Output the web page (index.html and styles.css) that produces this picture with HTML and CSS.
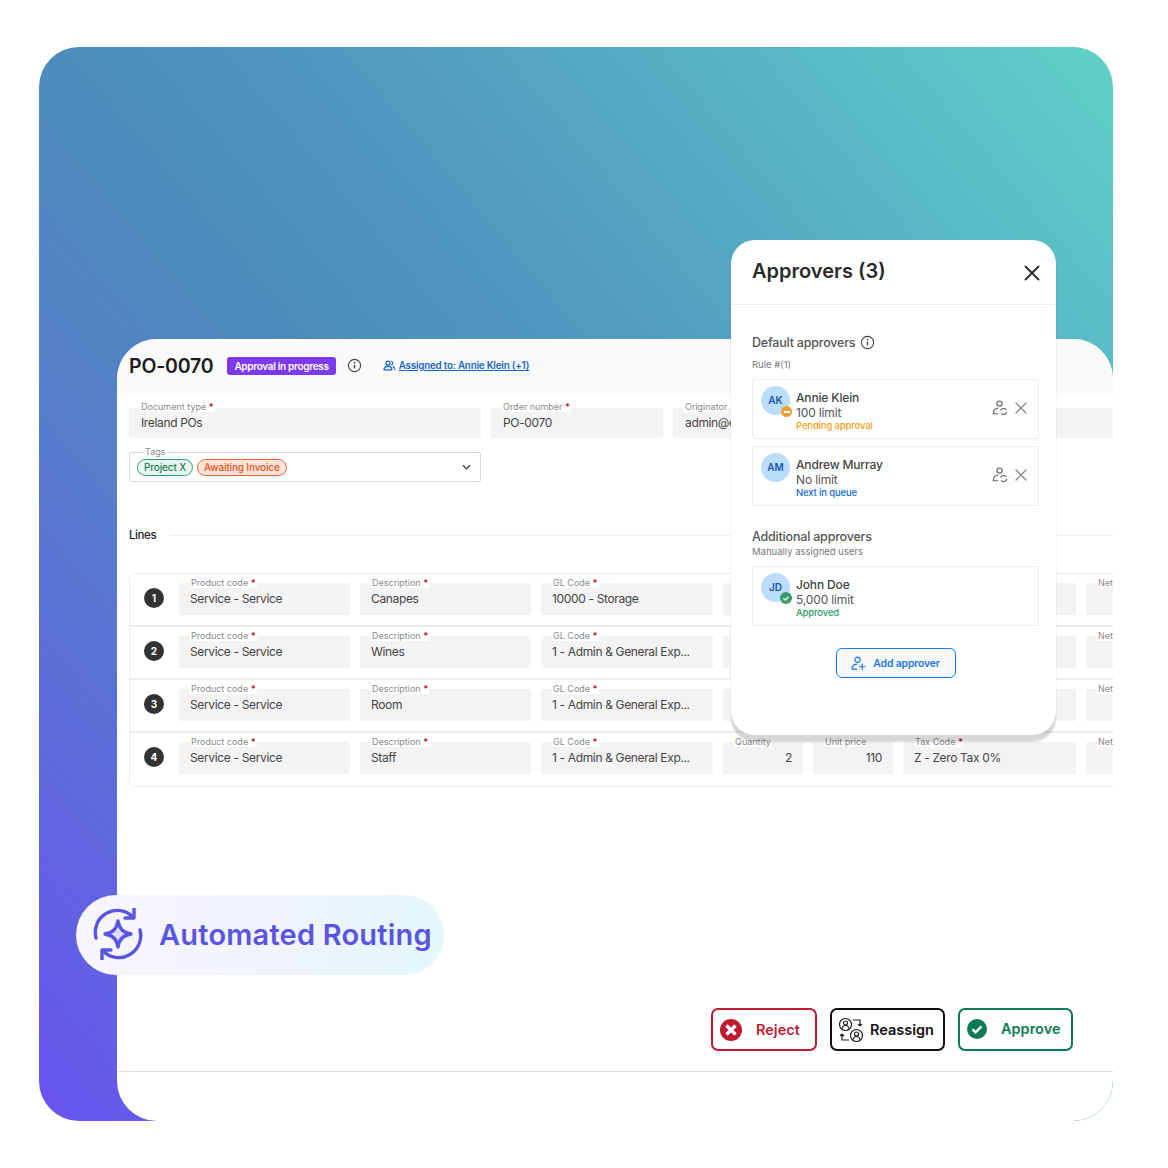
FILE: index.html
```html
<!DOCTYPE html>
<html lang="en">
<head>
    <meta charset="UTF-8">
    <title>Automated Routing</title>
    <link rel="stylesheet" href="styles.css">
</head>
<body>

<svg class="defs" width="0" height="0">
    <symbol id="i-info" viewBox="0 0 16 16">
        <circle cx="8" cy="8" r="6.5" fill="none" stroke="currentColor" stroke-width="1.2"/>
        <path d="M8 7.2v4" fill="none" stroke="currentColor" stroke-width="1.4"/>
        <circle cx="8" cy="5" r="0.9" fill="currentColor"/>
    </symbol>
    <symbol id="i-swap-user" viewBox="0 0 18 18">
        <g fill="none" stroke="currentColor" stroke-width="1.300" stroke-linecap="round">
            <circle cx="8.500" cy="4" r="2.900"/>
            <path d="M1.500 15.500c0-3.500 2-5.800 5-6.300"/>
            <path d="M1.500 15.500h5"/>
            <path d="M9.800 11.500a3.800 3.800 0 0 1 6-.8"/>
            <path d="M16.500 14a3.800 3.800 0 0 1-6 1.500"/>
        </g>
    </symbol>
    <symbol id="i-x" viewBox="0 0 14 14">
        <path d="M2 2l10 10M12 2L2 12" fill="none" stroke="currentColor" stroke-width="1.3" stroke-linecap="round"/>
    </symbol>
</svg>

<div class="panel">
    <main class="doc">
        <header class="doc-head">
            <h1>PO-0070</h1>
            <span class="status">Approval in progress</span>
            <svg class="info"><use href="#i-info"/></svg>
            <svg class="assign-icon" viewBox="0 0 16 14">
                <g fill="none" stroke="currentColor" stroke-width="1.5" stroke-linecap="round">
                    <circle cx="6" cy="4" r="2.6"/>
                    <path d="M1 12.5c0-3 2-4.500 5-4.500s5 1.500 5 4.500z"/>
                    <path d="M10.500 1.600a2.600 2.600 0 0 1 0 4.800M12.500 8.400c1.500.6 2.500 2 2.500 4"/>
                </g>
            </svg>
            <a class="assign" href="#">Assigned to: Annie Klein (+1)</a>
        </header>

        <section class="doc-fields">
            <div class="field f-doc"><label>Document type <b>*</b></label>Ireland POs</div>
            <div class="field f-order"><label>Order number <b>*</b></label>PO-0070</div>
            <div class="field f-orig"><label>Originator</label>admin@example.com</div>
            <div class="field f-rest"></div>
            <div class="field tags">
                <label>Tags</label>
                <span class="tag tag-green">Project X</span>
                <span class="tag tag-orange">Awaiting Invoice</span>
                <svg class="chev" viewBox="0 0 10 6"><path d="M1 1l4 4 4-4" fill="none" stroke="currentColor" stroke-width="1.5"/></svg>
            </div>
        </section>

        <div class="lines-title"><span>Lines</span><i></i></div>

        <section class="lines">
            <div class="line">
                <span class="num">1</span>
                <div class="field"><label>Product code <b>*</b></label>Service - Service</div>
                <div class="field"><label>Description <b>*</b></label>Canapes</div>
                <div class="field"><label>GL Code <b>*</b></label>10000 - Storage</div>
                <div class="field"></div>
                <div class="field"></div>
                <div class="field"></div>
                <div class="field"><label>Net</label></div>
            </div>
            <div class="line">
                <span class="num">2</span>
                <div class="field"><label>Product code <b>*</b></label>Service - Service</div>
                <div class="field"><label>Description <b>*</b></label>Wines</div>
                <div class="field"><label>GL Code <b>*</b></label>1 - Admin &amp; General Exp...</div>
                <div class="field"></div>
                <div class="field"></div>
                <div class="field"></div>
                <div class="field"><label>Net</label></div>
            </div>
            <div class="line">
                <span class="num">3</span>
                <div class="field"><label>Product code <b>*</b></label>Service - Service</div>
                <div class="field"><label>Description <b>*</b></label>Room</div>
                <div class="field"><label>GL Code <b>*</b></label>1 - Admin &amp; General Exp...</div>
                <div class="field"></div>
                <div class="field"></div>
                <div class="field"></div>
                <div class="field"><label>Net</label></div>
            </div>
            <div class="line">
                <span class="num">4</span>
                <div class="field"><label>Product code <b>*</b></label>Service - Service</div>
                <div class="field"><label>Description <b>*</b></label>Staff</div>
                <div class="field"><label>GL Code <b>*</b></label>1 - Admin &amp; General Exp...</div>
                <div class="field right"><label>Quantity</label>2</div>
                <div class="field right"><label>Unit price</label>110</div>
                <div class="field"><label>Tax Code <b>*</b></label>Z - Zero Tax 0%</div>
                <div class="field"><label>Net</label></div>
            </div>
        </section>

        <div class="actions">
            <button class="btn btn-reject">
                <svg viewBox="0 0 22 22"><circle cx="11" cy="11" r="11" fill="#c01a33"/><path d="M6.500 6.500l9 9M15.500 6.500l-9 9" stroke="#fff" stroke-width="3.400"/></svg>
                Reject
            </button>
            <button class="btn btn-reassign">
                <svg viewBox="0 0 26 26">
                    <g fill="none" stroke="#222" stroke-width="1.200">
                        <circle cx="7.500" cy="7.500" r="6"/>
                        <circle cx="7.500" cy="6" r="2"/>
                        <path d="M3.800 12c.5-2.500 2-3.500 3.700-3.500s3.200 1 3.700 3.500"/>
                        <circle cx="18.500" cy="18.500" r="6"/>
                        <circle cx="18.500" cy="17" r="2"/>
                        <path d="M14.800 23c.5-2.500 2-3.500 3.700-3.500s3.200 1 3.700 3.500"/>
                        <path d="M15 3h7v6M20 7l2 2 2-2M11 23H4v-6M2 19l2-2 2 2"/>
                    </g>
                </svg>
                Reassign
            </button>
            <button class="btn btn-approve">
                <svg viewBox="0 0 20 20"><circle cx="10" cy="10" r="10" fill="#0b7a55"/><path d="M5.500 10.300l3 3 6-6" fill="none" stroke="#fff" stroke-width="2.400"/></svg>
                Approve
            </button>
        </div>
        <div class="doc-foot"></div>
    </main>

    <div class="feature">
        <svg class="feature-icon" viewBox="0 0 52 52">
            <g fill="none" stroke="#5b54e0" stroke-width="3.400" stroke-linecap="round" stroke-linejoin="round">
                <path d="M4 30A22 22 0 0 1 41 9"/>
                <path d="M42 1v9H33"/>
                <path d="M48 22A22 22 0 0 1 11 43"/>
                <path d="M10 51v-9h9"/>
                <path d="M26 13c1.500 8 5 11.500 13 13-8 1.500-11.500 5-13 13-1.500-8-5-11.500-13-13 8-1.500 11.500-5 13-13z" fill="#dcdcfb"/>
            </g>
        </svg>
        <span>Automated Routing</span>
    </div>

    <aside class="approvers">
        <header class="approvers-head">
            <h2>Approvers (3)</h2>
            <svg class="close" viewBox="0 0 16 16"><path d="M1.500 1.500l13 13M14.500 1.500l-13 13" fill="none" stroke="currentColor" stroke-width="1.900" stroke-linecap="round"/></svg>
        </header>
        <div class="approvers-body">
            <h3>Default approvers <svg class="info"><use href="#i-info"/></svg></h3>
            <p class="sub">Rule #(1)</p>
            <div class="person">
                <div class="avatar">AK<i class="dot"></i></div>
                <div class="who">
                    <strong>Annie Klein</strong>
                    <span>100 limit</span>
                    <em class="pending">Pending approval</em>
                </div>
                <svg class="act"><use href="#i-swap-user"/></svg>
                <svg class="act-x"><use href="#i-x"/></svg>
            </div>
            <div class="person">
                <div class="avatar">AM</div>
                <div class="who">
                    <strong>Andrew Murray</strong>
                    <span>No limit</span>
                    <em class="next">Next in queue</em>
                </div>
                <svg class="act"><use href="#i-swap-user"/></svg>
                <svg class="act-x"><use href="#i-x"/></svg>
            </div>

            <h3 class="second">Additional approvers</h3>
            <p class="sub sub-tight">Manually assigned users</p>
            <div class="person">
                <div class="avatar">JD
                    <svg class="dot-ok" viewBox="0 0 12 12"><circle cx="6" cy="6" r="6" fill="#3a9c6e"/><path d="M3.500 6.200l1.800 1.800 3.200-3.400" fill="none" stroke="#fff" stroke-width="1.300"/></svg>
                </div>
                <div class="who">
                    <strong>John Doe</strong>
                    <span>5,000 limit</span>
                    <em class="ok">Approved</em>
                </div>
            </div>

            <button class="add">
                <svg viewBox="0 0 16 16"><g fill="none" stroke="currentColor" stroke-width="1.200" stroke-linecap="round"><circle cx="7" cy="4" r="2.800"/><path d="M1 14c0-3 2-5 5-5.300M1 14h5M12 8.500v6M9 11.500h6"/></g></svg>
                Add approver
            </button>
        </div>
    </aside>
</div>

</body>
</html>
```

FILE: styles.css
```css
/* base */
body {
    margin: 0;
    background-color: #fff;
    font-family: 'Inter', 'Noto Sans', sans-serif;
    color: #444;
}

.defs {
    position: absolute;
}

/* gradient panel */
.panel {
    position: relative;
    width: 1074px;
    height: 1074px;
    margin: 47px 0 0 39px;
    padding: 292px 0 0 78px;
    box-sizing: border-box;
    border-radius: 40px;
    background: linear-gradient(50deg, #6853f0 0%, #5580c8 33%, #4c8cba 46%, #5098bf 60%, #58b4c6 81%, #60d0c6 100%);
    overflow: hidden;
}

/* document */
.doc {
    display: flex;
    flex-direction: column;
    height: 782px;
    background-color: #fff;
    border-radius: 40px;
    overflow: hidden;
}

.doc-head {
    display: flex;
    align-items: center;
    flex: none;
    height: 56px;
    padding: 0 0 3px 12px;
    box-sizing: border-box;
    background-color: #fafafa;
}

.doc-head h1 {
    margin: 0 14px 0 0;
    font-size: 19.500px;
    font-weight: 600;
    letter-spacing: -0.2px;
    color: #1c1c1c;
}

.status {
    height: 18px;
    padding: 0 7px;
    border-radius: 3px;
    background-color: #7c3aed;
    color: #fff;
    font-size: 10px;
    font-weight: 600;
    line-height: 18px;
    letter-spacing: -0.3px;
}

.info {
    width: 15px;
    height: 15px;
    color: #444;
}

.doc-head .info {
    margin: 0 21px 0 11px;
}

.assign-icon {
    width: 13px;
    height: 11px;
    margin-right: 3px;
    color: #1466c2;
}

.assign {
    color: #1466c2;
    font-size: 9.800px;
    font-weight: 600;
    letter-spacing: -0.2px;
}

/* fields */
.field {
    position: relative;
    height: 32px;
    padding: 0 11px;
    box-sizing: border-box;
    border-radius: 2px;
    background-color: #f3f3f3;
    font-size: 12px;
    line-height: 32px;
    letter-spacing: -0.35px;
    color: #444;
    white-space: nowrap;
}

.field label {
    position: absolute;
    top: -6px;
    left: 11px;
    padding: 0 1px;
    background-color: #fff;
    font-size: 9px;
    line-height: 11px;
    letter-spacing: 0;
    color: #8a8a8a;
}

.field b {
    color: #c01a33;
}

.right {
    text-align: right;
}

.doc-fields {
    display: grid;
    grid-template-columns: 352px 172px 172px 441px;
    gap: 14px 10px;
    flex: none;
    padding: 13px 0 0 12px;
}

.doc-fields .field {
    height: 30px;
    line-height: 30px;
    padding-left: 12px;
}

.doc-fields label {
    top: -7px;
}

.doc-fields .tags {
    display: flex;
    align-items: center;
    grid-column: 1;
    gap: 4px;
    padding: 0 8px 0 7px;
    border: 1px solid #d8d8d8;
    background-color: #fff;
}

.tags label {
    left: 14px;
}

.tag {
    height: 17px;
    padding: 0 6px;
    border-radius: 9px;
    box-sizing: border-box;
    font-size: 10px;
    font-weight: 500;
    line-height: 15px;
    letter-spacing: -0.15px;
}

.tag-green {
    border: 1px solid #2f9a74;
    background-color: #e8f6f0;
    color: #1f7d5c;
}

.tag-orange {
    border: 1px solid #e8693a;
    background-color: #fde3d6;
    color: #d9562a;
}

.chev {
    width: 9px;
    height: 6px;
    margin-left: auto;
    margin-right: 1px;
    color: #444;
}

/* lines */
.lines-title {
    display: flex;
    align-items: center;
    flex: none;
    gap: 14px;
    margin: 46px 0 0 12px;
    font-size: 11.500px;
    font-weight: 500;
    letter-spacing: -0.4px;
    color: #222;
}

.lines-title i {
    flex: 1;
    height: 1px;
    background-color: #eee;
}

.lines {
    flex: none;
    width: 1100px;
    margin: 31px 0 0 12px;
    border: 1px solid #ececec;
    border-radius: 6px;
    box-sizing: border-box;
}

.line {
    display: grid;
    grid-template-columns: 171px 171px 172px 80px 80px 173px 100px;
    column-gap: 10px;
    height: 53px;
    padding: 9px 0 0 49px;
    box-sizing: border-box;
    border-bottom: 2px solid #ececec;
    position: relative;
}

.line:last-child {
    border-bottom: 0;
}

.num {
    position: absolute;
    top: 14px;
    left: 14px;
    width: 20px;
    height: 20px;
    border-radius: 50%;
    background-color: #333;
    color: #fff;
    font-size: 10px;
    font-weight: 700;
    line-height: 20px;
    text-align: center;
}

/* action buttons */
.actions {
    display: flex;
    justify-content: flex-end;
    flex: none;
    gap: 13px;
    margin-top: auto;
    padding-right: 40px;
}

.btn {
    display: flex;
    align-items: center;
    height: 43px;
    border-radius: 7px;
    background-color: #fff;
    font-family: 'Inter', sans-serif;
    font-size: 14.500px;
    font-weight: 600;
    box-sizing: border-box;
}

.btn-reject {
    width: 106px;
    gap: 14px;
    padding: 0 0 0 7px;
    border: 2px solid #c01a33;
    color: #c01a33;
}

.btn-reject svg {
    width: 22px;
    height: 22px;
}

.btn-reassign {
    width: 115px;
    gap: 6px;
    padding: 0 0 0 6px;
    border: 2px solid #111;
    color: #111;
}

.btn-reassign svg {
    width: 26px;
    height: 26px;
}

.btn-approve {
    width: 115px;
    gap: 14px;
    padding: 0 0 2px 7px;
    border: 2px solid #0b7a55;
    color: #0b7a55;
}

.btn-approve svg {
    width: 20px;
    height: 20px;
}

.doc-foot {
    flex: none;
    height: 50px;
    margin-top: 20px;
    border-top: 1px solid #dedede;
    box-sizing: border-box;
}

/* feature pill */
.feature {
    position: absolute;
    top: 848px;
    left: 37px;
    display: flex;
    align-items: center;
    gap: 15px;
    width: 368px;
    height: 80px;
    padding: 0 0 2px 16px;
    box-sizing: border-box;
    border-radius: 40px;
    background: linear-gradient(90deg, #f7f6fe 0%, #f1f3fd 50%, #e3f7fc 100%);
    color: #5b54e0;
    font-size: 29px;
    font-weight: 600;
    letter-spacing: 0.2px;
}

.feature-icon {
    width: 52px;
    height: 52px;
}

/* approvers popover */
.approvers {
    position: absolute;
    top: 193px;
    left: 692px;
    width: 325px;
    height: 495px;
    border-radius: 24px;
    background-color: #fff;
    box-shadow: 0 7px 2px rgba(0, 0, 0, 0.16);
}

.approvers-head {
    display: flex;
    align-items: center;
    justify-content: space-between;
    height: 65px;
    padding: 2px 16px 0 21px;
    box-sizing: border-box;
    border-bottom: 1px solid #ececec;
}

.approvers-head h2 {
    margin: 0 0 4px;
    font-size: 20px;
    font-weight: 600;
    color: #2a2a2a;
}

.close {
    width: 16px;
    height: 16px;
    color: #2a2a2a;
}

.approvers-body {
    display: flex;
    flex-direction: column;
    padding: 28px 17px 0 21px;
}

.approvers-body h3 {
    display: flex;
    align-items: center;
    gap: 5px;
    margin: 0;
    height: 18px;
    font-size: 12.500px;
    font-weight: 500;
    letter-spacing: -0.2px;
    color: #555;
}

.approvers-body h3.second {
    margin-top: 14px;
}

.sub {
    margin: 8px 0 8px;
    font-size: 9.500px;
    line-height: 12px;
    color: #777;
}

.sub-tight {
    margin-top: 1px;
}

.person {
    display: flex;
    align-items: center;
    height: 60px;
    margin-bottom: 7px;
    padding: 3px 10px 0 8px;
    box-sizing: border-box;
    border: 1px solid #ececec;
    border-radius: 3px;
}

.avatar {
    position: relative;
    flex: none;
    align-self: flex-start;
    width: 29px;
    height: 29px;
    margin: 3px 6px 0 0;
    border-radius: 50%;
    background-color: #bcdcfb;
    color: #1558b0;
    font-size: 10px;
    font-weight: 600;
    line-height: 29px;
    text-align: center;
}

/* pending badge with a white dash */
.dot {
    position: absolute;
    right: -2px;
    bottom: -2px;
    width: 11px;
    height: 11px;
    border-radius: 50%;
    background-color: #f0a030;
}

.dot::after {
    content: "";
    position: absolute;
    top: 4.500px;
    left: 2.500px;
    width: 6px;
    height: 2px;
    background-color: #fff;
}

.dot-ok {
    position: absolute;
    right: -2px;
    bottom: -2px;
    width: 12px;
    height: 12px;
}

.who {
    display: flex;
    flex-direction: column;
    flex: 1;
    font-size: 12px;
    line-height: 15px;
    letter-spacing: -0.15px;
    color: #555;
}

.who strong {
    font-weight: 500;
    color: #444;
}

.who em {
    font-size: 9.500px;
    font-style: normal;
    font-weight: 500;
    line-height: 11px;
}

.pending {
    color: #f0a020;
}

.next {
    color: #1668d0;
}

.ok {
    color: #2c9a68;
}

.act {
    width: 16px;
    height: 16px;
    margin: 0 6px 6px 0;
    color: #666;
}

.act-x {
    width: 14px;
    height: 14px;
    margin-bottom: 6px;
    color: #888;
}

.add {
    display: flex;
    align-items: center;
    justify-content: center;
    align-self: center;
    gap: 7px;
    width: 120px;
    height: 30px;
    margin: 15px 0 0 0;
    border: 1px solid #1a78e0;
    border-radius: 6px;
    background-color: #f7f8fa;
    color: #1a78e0;
    font-family: 'Inter', sans-serif;
    font-size: 10.500px;
    font-weight: 600;
    letter-spacing: -0.2px;
}

.add svg {
    width: 15px;
    height: 15px;
}
```
